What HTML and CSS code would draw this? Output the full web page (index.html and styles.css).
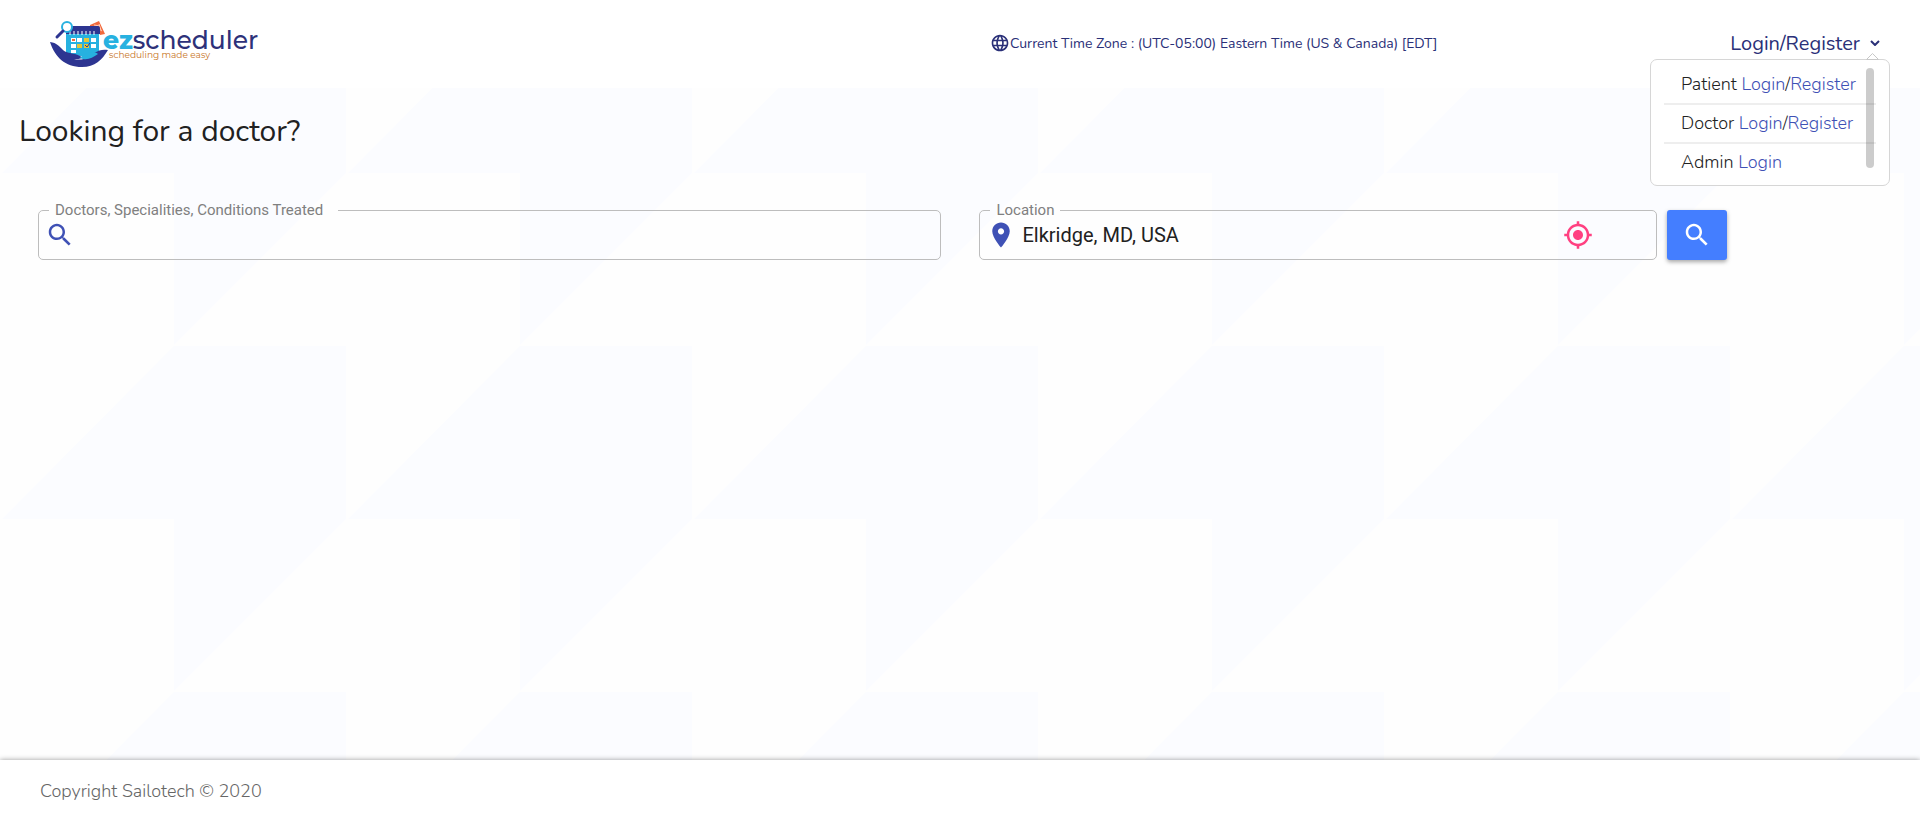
FILE: index.html
```html
<!DOCTYPE html>
<html lang="en">
<head>
<meta charset="utf-8">
<meta name="viewport" content="width=device-width, initial-scale=1">
<title>ezscheduler</title>
<link rel="stylesheet" href="styles.css">
</head>
<body>
<header class="header">
  <a class="logo" href="#" aria-label="ezscheduler, scheduling made easy">
    <svg class="logo-art" viewBox="0 0 214 48" role="img" aria-hidden="true">
      <path d="M40 5l9-4 6 13-5 1-3-8-7 1z" fill="#f26a3d"/>
      <path d="M44 5l6 1M49 4l2 6M46 7l6 4" stroke="#ffd0bd" stroke-width="1" fill="none"/>
      <rect x="16" y="8" width="33" height="28" rx="3" fill="#27b1e0"/>
      <path d="M18 6h30q2 0 2 3v5H16V9q0-3 2-3z" fill="#2d3591"/>
      <path d="M20 11v4M24 11v4M28 11v4M32 11v4M36 11v4M40 11v4M44 11v4" stroke="#fff" stroke-width="1"/>
      <path d="M21 18h5v4h-5zM27 18h5v4h-5zM41 18h5v4h-5zM21 24h5v4h-5zM21 30h5v3h-5zM41 24h5v4h-5z" fill="#fff"/>
      <path d="M34 18h5v4h-5zM27 24h5v4h-5zM34 24h5v4h-5z" fill="#e3c63b"/>
      <path d="M22 20h3" stroke="#f26a3d" stroke-width="2"/>
      <path d="M35 25l2 2 3-4" fill="none" stroke="#2d3591" stroke-width="1"/>
      <circle cx="17" cy="7" r="5" fill="#fff" stroke="#27b1e0" stroke-width="2"/>
      <path d="M13 11l-6 6" stroke="#2d3591" stroke-width="3" stroke-linecap="round"/>
      <path d="M0 22c7 1 9 4 13 8 3 3 8 3 12 4 4 1 7 3 7 4-2 1-5 1-8 1 10 2 15-2 20-6 5-3 9-4 14-3-6 10-13 17-26 17C15 47 5 37 0 22z" fill="#2d3591"/>
      <path d="M30 38c7 3 12 0 18-4-4-3-8-2-12 0-2 1-5 2-6 4z" fill="#27b1e0"/>
      <text class="logo-name" x="53" y="29"><tspan class="logo-ez">ez</tspan>scheduler</text>
      <text class="logo-tag" x="59" y="38">scheduling made easy</text>
    </svg>
  </a>
  <p class="timezone">
    <svg class="icon-globe" viewBox="0 0 24 24" aria-hidden="true"><path fill="currentColor" d="M11.99 2C6.47 2 2 6.48 2 12s4.47 10 9.99 10C17.52 22 22 17.52 22 12S17.52 2 11.99 2zm6.93 6h-2.95c-.32-1.25-.78-2.45-1.38-3.56 1.84.63 3.37 1.91 4.33 3.56zM12 4.04c.83 1.2 1.48 2.53 1.91 3.96h-3.82c.43-1.43 1.08-2.76 1.91-3.96zM4.26 14C4.1 13.36 4 12.69 4 12s.1-1.36.26-2h3.38c-.08.66-.14 1.32-.14 2s.06 1.34.14 2H4.26zm.82 2h2.95c.32 1.25.78 2.45 1.38 3.56-1.84-.63-3.37-1.9-4.33-3.56zm2.95-8H5.08c.96-1.66 2.49-2.93 4.33-3.56C8.81 5.55 8.35 6.75 8.03 8zM12 19.96c-.83-1.2-1.48-2.53-1.91-3.96h3.82c-.43 1.43-1.08 2.76-1.91 3.96zM14.34 14H9.66c-.09-.66-.16-1.32-.16-2s.07-1.35.16-2h4.68c.09.65.16 1.32.16 2s-.07 1.34-.16 2zm.25 5.56c.6-1.11 1.06-2.31 1.38-3.56h2.95c-.96 1.65-2.49 2.93-4.33 3.56zM16.36 14c.08-.66.14-1.32.14-2s-.06-1.34-.14-2h3.38c.16.64.26 1.31.26 2s-.1 1.36-.26 2h-3.38z"/></svg>
    <span>Current Time Zone : (UTC-05:00) Eastern Time (US &amp; Canada) [EDT]</span>
  </p>
  <nav class="account">
    <button class="account-toggle" type="button" aria-expanded="true" aria-controls="account-menu">Login/Register
      <svg class="icon-chevron" viewBox="0 0 10 6" aria-hidden="true"><path d="M1 1l4 4 4-4" fill="none" stroke="currentColor" stroke-width="2"/></svg>
    </button>
    <div class="menu" id="account-menu">
      <svg class="menu-arrow" viewBox="0 0 13 7" aria-hidden="true"><path d="M0.5 6.5L6.5 0.5l6 6z" fill="#fff" stroke="#c8c8c8"/></svg>
      <ul class="menu-list">
        <li class="menu-item">Patient <a href="#">Login</a>/<a href="#">Register</a></li>
        <li class="menu-item">Doctor <a href="#">Login</a>/<a href="#">Register</a></li>
        <li class="menu-item">Admin <a href="#">Login</a></li>
      </ul>
      <span class="menu-scroll"></span>
    </div>
  </nav>
</header>
<main class="main">
  <h1 class="title">Looking for a doctor?</h1>
  <form class="search">
    <fieldset class="field field-query">
      <legend class="legend legend-query"><label for="query">Doctors, Specialities, Conditions Treated</label></legend>
      <div class="field-row">
        <svg class="icon" viewBox="0 0 24 24" aria-hidden="true"><path fill="currentColor" d="M15.5 14h-.79l-.28-.27C15.41 12.59 16 11.11 16 9.5 16 5.91 13.09 3 9.5 3S3 5.91 3 9.5 5.91 16 9.5 16c1.61 0 3.09-.59 4.23-1.57l.27.28v.79l5 4.99L20.49 19l-4.99-5zm-6 0C7.01 14 5 11.99 5 9.5S7.01 5 9.5 5 14 7.01 14 9.5 11.99 14 9.5 14z"/></svg>
        <input class="input" id="query" type="text">
      </div>
    </fieldset>
    <fieldset class="field field-location">
      <legend class="legend"><label for="location">Location</label></legend>
      <div class="field-row">
        <svg class="icon" viewBox="0 0 24 24" aria-hidden="true"><path fill="currentColor" d="M12 2C8.13 2 5 5.13 5 9c0 5.25 7 13 7 13s7-7.75 7-13c0-3.87-3.13-7-7-7zm0 9.5c-1.38 0-2.5-1.12-2.5-2.5s1.12-2.5 2.5-2.5 2.5 1.12 2.5 2.5-1.12 2.5-2.5 2.5z"/></svg>
        <input class="input" id="location" type="text" value="Elkridge, MD, USA">
        <button class="locate" type="button" aria-label="Use my location">
          <svg class="icon" viewBox="0 0 24 24" aria-hidden="true"><path fill="currentColor" d="M12 8c-2.21 0-4 1.79-4 4s1.79 4 4 4 4-1.79 4-4-1.79-4-4-4zm8.94 3c-.46-4.17-3.77-7.48-7.94-7.94V1h-2v2.06C6.83 3.52 3.52 6.83 3.06 11H1v2h2.06c.46 4.17 3.77 7.48 7.94 7.94V23h2v-2.06c4.17-.46 7.48-3.77 7.94-7.94H23v-2h-2.06zM12 19c-3.87 0-7-3.13-7-7s3.13-7 7-7 7 3.13 7 7-3.13 7-7 7z"/></svg>
        </button>
      </div>
    </fieldset>
    <button class="submit" type="submit" aria-label="Search">
      <svg class="icon" viewBox="0 0 24 24" aria-hidden="true"><path fill="currentColor" d="M15.5 14h-.79l-.28-.27C15.41 12.59 16 11.11 16 9.5 16 5.91 13.09 3 9.5 3S3 5.91 3 9.5 5.91 16 9.5 16c1.61 0 3.09-.59 4.23-1.57l.27.28v.79l5 4.99L20.49 19l-4.99-5zm-6 0C7.01 14 5 11.99 5 9.5S7.01 5 9.5 5 14 7.01 14 9.5 11.99 14 9.5 14z"/></svg>
    </button>
  </form>
</main>
<footer class="footer">Copyright Sailotech © 2020</footer>
</body>
</html>
```
FILE: styles.css
```css
* { box-sizing: border-box; }

body {
  margin: 0;
  min-height: 100vh;
  display: flex;
  flex-direction: column;
  font-family: Nunito, "Open Sans", "Noto Sans", sans-serif;
  font-weight: 300;
  color: #212121;
  background-color: #fefefe;
  background-image: url("data:image/svg+xml,%3Csvg xmlns='http://www.w3.org/2000/svg' width='346' height='346' viewBox='0 0 346 346'%3E%3Cpath d='M174 0H346V173L174 345V173H2z' fill='%23fbfcff'/%3E%3C/svg%3E");
}

.header {
  display: grid;
  grid-template-columns: 50% 1fr auto;
  align-items: center;
  height: 88px;
  padding: 0 30px 2px 50px;
  background: #fff;
  color: #2a3078;
}

.logo { display: block; width: 214px; height: 48px; margin-top: 2px; }
.logo-art { display: block; width: 100%; height: 100%; overflow: visible; }
.logo-name { font: 500 25px Montserrat, Nunito, sans-serif; fill: #2d3179; }
.logo-ez { font-weight: 800; fill: #27b1e0; }
.logo-tag { font: 400 9px Montserrat, Nunito, sans-serif; fill: #c77425; }

.timezone {
  display: flex;
  align-items: center;
  margin: 0;
  padding-left: 20px;
  font-size: 14px;
  font-weight: 400;
  white-space: nowrap;
}
.icon-globe { width: 20px; height: 20px; flex: none; }

.account { position: relative; }
.account-toggle {
  display: flex;
  align-items: center;
  gap: 10px;
  padding: 0 10px;
  border: 0;
  background: none;
  color: inherit;
  font: inherit;
  font-size: 20px;
  font-weight: 400;
}
.icon-chevron { width: 10px; height: 6px; }

.menu {
  position: absolute;
  top: 29px;
  right: 0;
  width: 240px;
  padding: 6px 13px 4px;
  border: 1px solid #d6d6d6;
  border-radius: 7px;
  background: #fff;
  color: #212121;
}
.menu-arrow { position: absolute; top: -7px; right: 10px; width: 13px; height: 7px; }
.menu-list { margin: 0; padding: 0; list-style: none; }
.menu-item {
  padding: 0 17px;
  font-size: 18px;
  line-height: 37px;
  white-space: nowrap;
}
.menu-item + .menu-item { border-top: 2px solid #eee; }
.menu-item a { color: #3f51b5; text-decoration: none; }
.menu-scroll {
  position: absolute;
  top: 8px;
  right: 15px;
  width: 8px;
  height: 100px;
  border-radius: 4px;
  background: rgba(0, 0, 0, 0.2);
}

.main { flex: 1; padding: 24px 19px; }
.title { margin: 0; font-size: 30px; line-height: 40px; font-weight: 400; }

.search {
  display: grid;
  grid-template-columns: 4fr 38px 3fr 10px 60px;
  align-items: end;
  margin-top: 48px;
  padding: 0 174px 0 19px;
  font-family: Roboto, sans-serif;
}
.field {
  min-width: 0;
  margin: 0;
  padding: 0 6px;
  border: 1px solid #bdbdbd;
  border-radius: 5px;
}
.field-query { grid-column: 1; }
.field-location { grid-column: 3; }
.legend {
  margin-left: 4px;
  padding: 0 6px;
  font-size: 15px;
  font-weight: 400;
  line-height: 20px;
  color: #808080;
}
.legend-query { padding-right: 15px; }
.field-row { display: flex; align-items: center; height: 39px; padding-bottom: 9px; }
.icon { width: 30px; height: 30px; flex: none; display: block; }
.field .icon { color: #3f51b5; }
.input {
  flex: 1;
  min-width: 0;
  padding: 0 6px;
  border: 0;
  outline: 0;
  background: none;
  color: #212121;
  font: 400 20px Roboto, sans-serif;
}
.locate { margin-right: 57px; padding: 0; border: 0; background: none; }
.field .locate .icon { color: #ff4081; }
.submit {
  grid-column: 5;
  display: flex;
  align-items: center;
  justify-content: center;
  height: 50px;
  padding: 0;
  border: 0;
  border-radius: 3px;
  background: #447eff;
  color: #fff;
  box-shadow: 0 2px 4px rgba(0, 0, 0, 0.35);
}

.footer {
  height: 62px;
  padding: 0 40px;
  line-height: 62px;
  font-size: 18px;
  color: #666;
  background: #fff;
  box-shadow: 0 0 5px rgba(0, 0, 0, 0.4);
}
```
